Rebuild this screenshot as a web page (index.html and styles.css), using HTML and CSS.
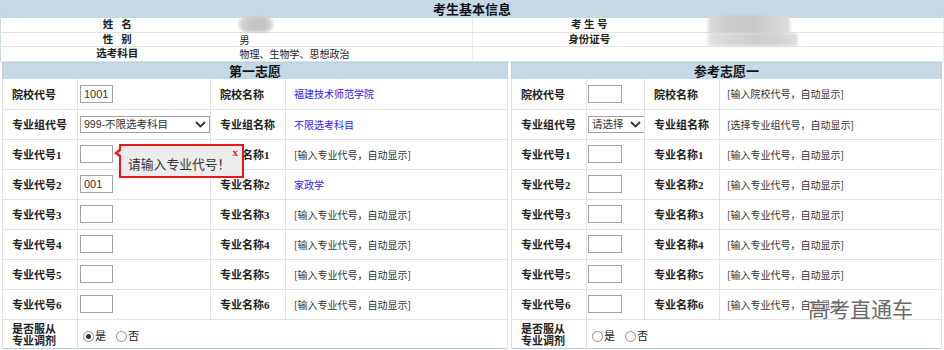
FILE: index.html
```html
<!DOCTYPE html>
<html lang="zh-CN">
<head>
<meta charset="utf-8">
<title>考生基本信息</title>
<link rel="stylesheet" href="styles.css">
</head>
<body>
<div class="page">
  <table class="info">
    <colgroup><col class="c1"><col class="c2"><col class="c3"><col class="c4"></colgroup>
    <tr class="hdrow"><th colspan="4">考生基本信息</th></tr>
    <tr class="r1"><td class="lb">姓&nbsp;&nbsp;&nbsp;名</td><td class="val"><span class="blur bname"></span></td><td class="lb">考&nbsp;生&nbsp;号</td><td class="val"><span class="blur bid"></span></td></tr>
    <tr class="r2"><td class="lb">性&nbsp;&nbsp;&nbsp;别</td><td class="val">男</td><td class="lb">身份证号</td><td class="val"><span class="blur bcard"></span></td></tr>
    <tr class="r3"><td class="lb">选考科目</td><td class="val">物理、生物学、思想政治</td><td class="lb"></td><td class="val"></td></tr>
  </table>

  <div class="panels">
    <table class="vol vleft">
      <colgroup><col class="w-lb"><col class="w-in"><col class="w-lb"><col class="w-val"></colgroup>
      <tr class="vhd"><th colspan="4">第一志愿</th></tr>
      <tr><td class="k">院校代号</td><td class="f"><input class="box" type="text" value="1001"></td><td class="k">院校名称</td><td class="v link">福建技术师范学院</td></tr>
      <tr><td class="k">专业组代号</td><td class="f"><span class="sel wide"><span class="seltxt">999-不限选考科目</span><svg class="chev" width="11" height="7" viewBox="0 0 11 7"><path d="M1 1l4.5 4.5L10 1" fill="none" stroke="#333" stroke-width="1.8"/></svg></span></td><td class="k">专业组名称</td><td class="v link">不限选考科目</td></tr>
      <tr><td class="k">专业代号1</td><td class="f"><input class="box" type="text" value=""></td><td class="k">专业名称1</td><td class="v">[输入专业代号，自动显示]</td></tr>
      <tr><td class="k">专业代号2</td><td class="f"><input class="box" type="text" value="001"></td><td class="k">专业名称2</td><td class="v link">家政学</td></tr>
      <tr><td class="k">专业代号3</td><td class="f"><input class="box" type="text" value=""></td><td class="k">专业名称3</td><td class="v">[输入专业代号，自动显示]</td></tr>
      <tr><td class="k">专业代号4</td><td class="f"><input class="box" type="text" value=""></td><td class="k">专业名称4</td><td class="v">[输入专业代号，自动显示]</td></tr>
      <tr><td class="k">专业代号5</td><td class="f"><input class="box" type="text" value=""></td><td class="k">专业名称5</td><td class="v">[输入专业代号，自动显示]</td></tr>
      <tr><td class="k">专业代号6</td><td class="f"><input class="box" type="text" value=""></td><td class="k">专业名称6</td><td class="v">[输入专业代号，自动显示]</td></tr>
      <tr class="last"><td class="k two">是否服从<br>专业调剂</td><td class="f radios" colspan="3"><span class="radio on"></span><span class="rl">是</span><span class="radio"></span><span class="rl">否</span></td></tr>
    </table>

    <table class="vol vright">
      <colgroup><col class="w-lb"><col class="w-in2"><col class="w-lb"><col class="w-val"></colgroup>
      <tr class="vhd"><th colspan="4">参考志愿一</th></tr>
      <tr><td class="k">院校代号</td><td class="f"><input class="box" type="text" value=""></td><td class="k">院校名称</td><td class="v">[输入院校代号，自动显示]</td></tr>
      <tr><td class="k">专业组代号</td><td class="f"><span class="sel narrow"><span class="seltxt">请选择</span><svg class="chev" width="11" height="7" viewBox="0 0 11 7"><path d="M1 1l4.5 4.5L10 1" fill="none" stroke="#333" stroke-width="1.8"/></svg></span></td><td class="k">专业组名称</td><td class="v">[选择专业组代号，自动显示]</td></tr>
      <tr><td class="k">专业代号1</td><td class="f"><input class="box" type="text" value=""></td><td class="k">专业名称1</td><td class="v">[输入专业代号，自动显示]</td></tr>
      <tr><td class="k">专业代号2</td><td class="f"><input class="box" type="text" value=""></td><td class="k">专业名称2</td><td class="v">[输入专业代号，自动显示]</td></tr>
      <tr><td class="k">专业代号3</td><td class="f"><input class="box" type="text" value=""></td><td class="k">专业名称3</td><td class="v">[输入专业代号，自动显示]</td></tr>
      <tr><td class="k">专业代号4</td><td class="f"><input class="box" type="text" value=""></td><td class="k">专业名称4</td><td class="v">[输入专业代号，自动显示]</td></tr>
      <tr><td class="k">专业代号5</td><td class="f"><input class="box" type="text" value=""></td><td class="k">专业名称5</td><td class="v">[输入专业代号，自动显示]</td></tr>
      <tr><td class="k">专业代号6</td><td class="f"><input class="box" type="text" value=""></td><td class="k">专业名称6</td><td class="v">[输入专业代号，自动显示]</td></tr>
      <tr class="last"><td class="k two">是否服从<br>专业调剂</td><td class="f radios" colspan="3"><span class="radio"></span><span class="rl">是</span><span class="radio"></span><span class="rl">否</span></td></tr>
    </table>
  </div>

  <div class="tip"><span class="tiptxt">请输入专业代号！</span><span class="tipx">x</span></div>
  <div class="wm">高考直通车</div>
</div>
</body>
</html>
```
FILE: styles.css
```css
* { box-sizing: border-box; }
html, body { margin: 0; padding: 0; background: #fff; }
body {
  width: 944px;
  height: 350px;
  overflow: hidden;
  font-family: "Noto Sans CJK SC", "Liberation Sans", sans-serif;
  color: #222;
}
.page { position: relative; width: 944px; height: 350px; }

/* ---------- top info table ---------- */
.info {
  width: 943px;
  border-collapse: collapse;
  table-layout: fixed;
  border: 1px solid #c9d9e5;
}
.info .c1 { width: 233px; }
.info .c2 { width: 239px; }
.info .c3 { width: 233px; }
.info .c4 { width: 238px; }
.info th {
  height: 17px;
  padding: 0;
  background: #c5d8e6;
  font-size: 13px;
  line-height: 16px;
  font-weight: bold;
  color: #111;
  text-align: center;
}
.info td {
  padding: 0;
  border-bottom: 1px solid #e2e2e2;
  font-size: 10px;
  line-height: 13px;
  height: 14px;
  white-space: nowrap;
}
.info tr.r3 td { height: 15px; }
.info td.lb {
  text-align: center;
  font-weight: bold;
  font-family: "Liberation Serif", "Noto Sans CJK SC", serif;
  font-size: 10.5px;
}
.info td.val {
  padding-left: 6px;
  color: #222;
  border-right: 1px solid #ececec;
  position: relative;
}
.blur {
  display: inline-block;
  vertical-align: top;
  filter: blur(1.5px);
}
.bname {
  width: 34px;
  height: 15px;
  margin-top: -1px;
  margin-left: -1px;
  border-radius: 7px;
  background: linear-gradient(90deg, #d4d4d4 0, #c6c6c6 40%, #c2c2c2 70%, #d8d8d8 100%);
}
.bid {
  position: absolute;
  left: 2px;
  top: -3px;
  width: 82px;
  height: 19px;
  border-radius: 4px;
  background: linear-gradient(90deg, #dadada 0, #cbcbcb 25%, #c9c9c9 55%, #d2d2d2 75%, #dcdcdc 100%);
}
.bcard {
  position: absolute;
  left: 2px;
  top: 0;
  width: 90px;
  height: 13px;
  border-radius: 3px;
  background: linear-gradient(90deg, #e2e2e2 0, #d6d6d6 25%, #cdcdcd 55%, #d2d2d2 80%, #e0e0e0 100%);
}

/* ---------- volunteer panels ---------- */
.panels {
  display: flex;
  gap: 3px;
  padding-left: 2px;
}
.vol {
  border-collapse: collapse;
  table-layout: fixed;
  border: 1px solid #bccfdd;
}
.vleft { width: 505px; }
.vright { width: 430px; }
.w-lb { width: 75px; }
.w-in { width: 133px; }
.w-in2 { width: 58px; }
.w-val { width: 222px; }
.vhd th {
  height: 17px;
  padding: 0;
  background: #c5d8e6;
  font-size: 13px;
  line-height: 16px;
  font-weight: bold;
  color: #111;
  text-align: center;
}
.vol td {
  height: 30px;
  padding: 0;
  border: 1px solid #e3e3e3;
  white-space: nowrap;
  vertical-align: middle;
}
.vol tr:nth-child(2) td { border-top: 0; }
.vol td.k {
  padding-left: 9px;
  font-family: "Liberation Serif", "Noto Sans CJK SC", serif;
  font-weight: bold;
  font-size: 11px;
  color: #222;
}
.vol td.f { padding-left: 1px; }
.vleft td.f { padding-left: 2px; }
.vol td.v {
  padding-left: 7px;
  font-size: 10px;
  color: #333;
}
.vleft td.v { padding-left: 8px; }
.vol td.link { color: #2424f0; }
.vol tr.last td { height: 29px; border-bottom: 0; }
.vol td.two { line-height: 12px; padding-top: 2px; }

.box {
  display: block;
  width: 34px;
  height: 18px;
  margin: 0;
  padding: 0 0 0 3px;
  border: 1px solid #a3a3a3;
  background: #fff;
  font-family: "Liberation Sans", sans-serif;
  font-size: 11px;
  color: #333;
  outline: none;
}
.vleft .box { width: 33px; }

.sel {
  display: flex;
  align-items: center;
  justify-content: space-between;
  height: 17px;
  border: 1px solid #a3a3a3;
  background: #fff;
  padding: 0 3px 0 3px;
}
.sel.wide { width: 130px; }
.sel.narrow { width: 57px; }
.seltxt {
  font-family: "Liberation Sans", "Noto Sans CJK SC", sans-serif;
  font-size: 10.5px;
  line-height: 15px;
  color: #333;
}
.chev { display: block; flex: none; }

.radios { padding-left: 4px !important; }
.radio {
  display: inline-block;
  width: 11px;
  height: 11px;
  border: 1px solid #8d8d8d;
  border-radius: 50%;
  background: #fdfdfd;
  vertical-align: middle;
  position: relative;
  margin-left: 1px;
}
.radio.on::after {
  content: "";
  position: absolute;
  left: 2px;
  top: 2px;
  width: 5px;
  height: 5px;
  border-radius: 50%;
  background: #333;
}
.rl {
  display: inline-block;
  vertical-align: middle;
  font-size: 11px;
  line-height: 12px;
  margin-left: 1px;
  margin-right: 9px;
  font-family: "Liberation Serif", "Noto Sans CJK SC", serif;
  color: #222;
}

/* ---------- tooltip ---------- */
.tip {
  position: absolute;
  left: 119px;
  top: 144px;
  width: 125px;
  height: 34px;
  border: 2px solid #e8191c;
  background: #ececec;
  padding: 4px 0 0 7px;
}
.tip::before {
  content: "";
  position: absolute;
  left: -7px;
  top: 3px;
  border-style: solid;
  border-width: 4px 5px 4px 0;
  border-color: transparent #e8191c transparent transparent;
}
.tip::after {
  content: "";
  position: absolute;
  left: -3px;
  top: 4px;
  border-style: solid;
  border-width: 3px 4px 3px 0;
  border-color: transparent #ececec transparent transparent;
}
.tiptxt {
  font-size: 12.8px;
  line-height: 22px;
  color: #333;
  white-space: nowrap;
}
.tipx {
  position: absolute;
  right: 4px;
  top: 1px;
  font-family: "Liberation Serif", serif;
  font-weight: bold;
  font-size: 11px;
  line-height: 10px;
  color: #e8191c;
}

/* ---------- watermark ---------- */
.wm {
  position: absolute;
  left: 808px;
  top: 295px;
  font-size: 21px;
  line-height: 26px;
  color: #6a6a6a;
  text-shadow: 0 0 2px #fff, 0 0 1px #fff;
  white-space: nowrap;
}
```
